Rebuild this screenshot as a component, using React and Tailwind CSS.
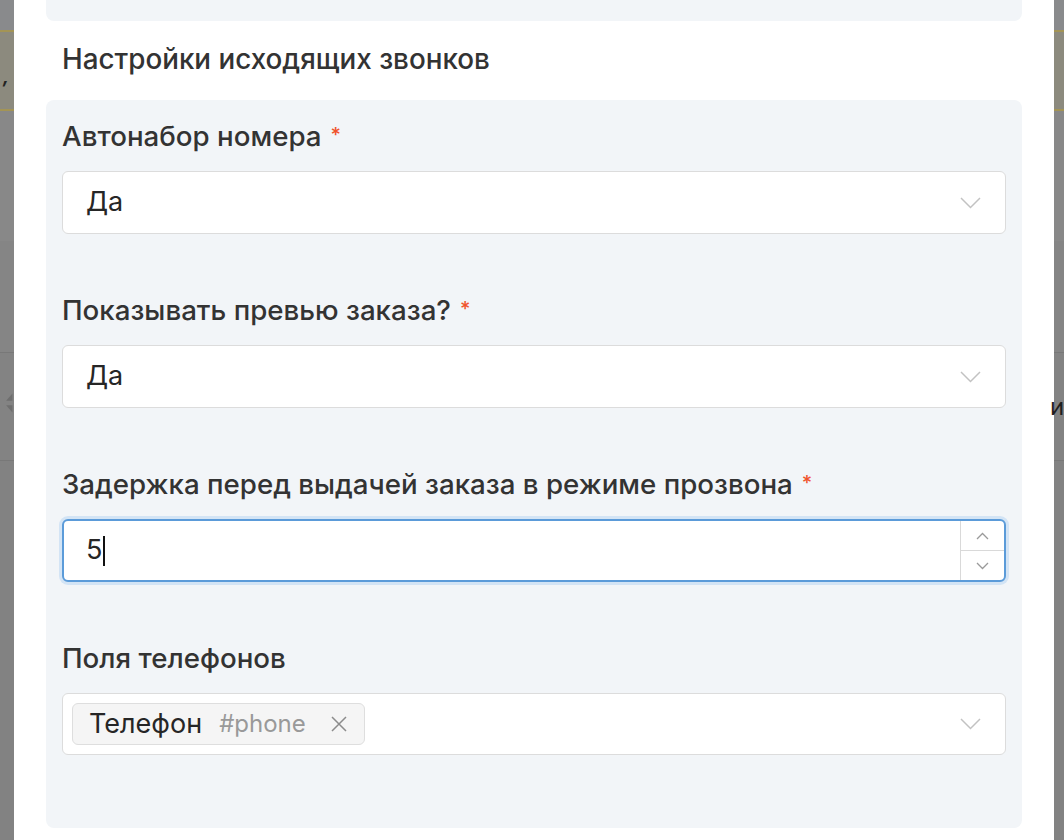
function Label({ children, required }) {
  return (
    <div className="flex h-8 items-center text-[27.7px] font-medium text-[#333]">
      <span>{children}</span>
      {required && <span className="ml-[9px] -mt-1 text-[20px] text-[#f0532d]">*</span>}
    </div>
  )
}

function Chevron({ className }) {
  return (
    <svg width="21" height="12" viewBox="0 0 21 12" className={className}>
      <path d="M1 1 L10.5 10.5 L20 1" fill="none" stroke="#c2c2c2" strokeWidth="1.5" />
    </svg>
  )
}

function SelectBox({ value }) {
  return (
    <div className="mt-[18px] flex h-[63px] items-center justify-between rounded-md border border-[#dcdcdc] bg-white pl-[23px] pr-[24px]">
      <span className="text-[27px] text-[#262626]">{value}</span>
      <Chevron />
    </div>
  )
}

function BackdropStrip({ right }) {
  return (
    <div className="flex w-full flex-col bg-[#828282]">
      <div className="h-[30px] bg-[#898a8c]" />
      <div className="h-[2px] bg-[#a39455]" />
      <div className="flex h-[77px] items-center bg-[#8c8a7e]">
        {!right && <span className="ml-[3px] mt-3 text-[18px] font-bold italic text-[#222]">,</span>}
      </div>
      <div className="h-[2px] bg-[#a39455]" />
      <div className="h-[130px] bg-[#888888]" />
      <div className="h-[111px] bg-[#858585]" />
      <div className="h-px bg-[#787878]" />
      <div className="flex h-[107px] items-center bg-[#838383]">
        {right ? (
          <span className="-ml-[4px] text-[24px] text-[#1f1f1f]">и</span>
        ) : (
          <svg width="14" height="28" viewBox="0 0 14 28" className="ml-[3px] -mt-2">
            <path d="M12 2 L4 11 L12 11 Z" fill="#6e6e6e" />
            <path d="M12 26 L4 17 L12 17 Z" fill="#6e6e6e" />
          </svg>
        )}
      </div>
      <div className="h-px bg-[#787878]" />
    </div>
  )
}

export default function App() {
  return (
    <div className="flex h-[840px] w-[1064px] overflow-hidden bg-white" style={{ fontFamily: "Inter, 'Noto Sans', sans-serif" }}>
      <div className="flex w-[14px] shrink-0">
        <BackdropStrip />
      </div>

      <div className="flex flex-1 flex-col bg-white px-8">
        <div className="h-[21px] rounded-b-lg bg-[#f2f5f8]" />
        <h3 className="mt-[23px] flex h-8 items-center px-4 text-[27.8px] font-medium text-[#333]">
          Настройки исходящих звонков
        </h3>

        <div className="mt-6 rounded-lg bg-[#f2f5f8] px-4 pb-[73px] pt-[21px]">
          <div className="mb-[61px]">
            <Label required>Автонабор номера</Label>
            <SelectBox value="Да" />
          </div>

          <div className="mb-[61px]">
            <Label required>Показывать превью заказа?</Label>
            <SelectBox value="Да" />
          </div>

          <div className="mb-[61px]">
            <Label required>Задержка перед выдачей заказа в режиме прозвона</Label>
            <div className="mt-[18px] flex h-[63px] rounded-md border-2 border-[#5b9bd9] bg-white shadow-[0_0_0_3px_#d3e4f5]">
              <div className="flex flex-1 items-center pl-[22px]">
                <span className="text-[27px] text-[#262626]">5</span>
                <span className="ml-px h-[30px] w-[2px] bg-[#111]" />
              </div>
              <div className="flex w-[44px] flex-col border-l border-[#d9d9d9]">
                <div className="flex flex-1 items-center justify-center border-b border-[#d9d9d9]">
                  <svg width="13" height="8" viewBox="0 0 13 8">
                    <path d="M1 7 L6.5 1.5 L12 7" fill="none" stroke="#9a9a9a" strokeWidth="1.3" />
                  </svg>
                </div>
                <div className="flex flex-1 items-center justify-center">
                  <svg width="13" height="8" viewBox="0 0 13 8">
                    <path d="M1 1 L6.5 6.5 L12 1" fill="none" stroke="#9a9a9a" strokeWidth="1.3" />
                  </svg>
                </div>
              </div>
            </div>
          </div>

          <div>
            <Label>Поля телефонов</Label>
            <div className="mt-[18px] flex h-[62px] items-center justify-between rounded-md border border-[#dcdcdc] bg-white pl-[9px] pr-[24px]">
              <div className="flex h-[42px] items-center rounded-md border border-[#dedede] bg-[#f5f5f5] pl-4 pr-[17px]">
                <span className="text-[27px] text-[#262626]">Телефон</span>
                <span className="ml-[17px] text-[24px] text-[#999]">#phone</span>
                <svg width="16" height="16" viewBox="0 0 16 16" className="ml-[25px]">
                  <path d="M1 1 L15 15 M15 1 L1 15" fill="none" stroke="#8c8c8c" strokeWidth="1.5" />
                </svg>
              </div>
              <Chevron />
            </div>
          </div>
        </div>
      </div>

      <div className="flex w-[10px] shrink-0">
        <BackdropStrip right />
      </div>
    </div>
  )
}
